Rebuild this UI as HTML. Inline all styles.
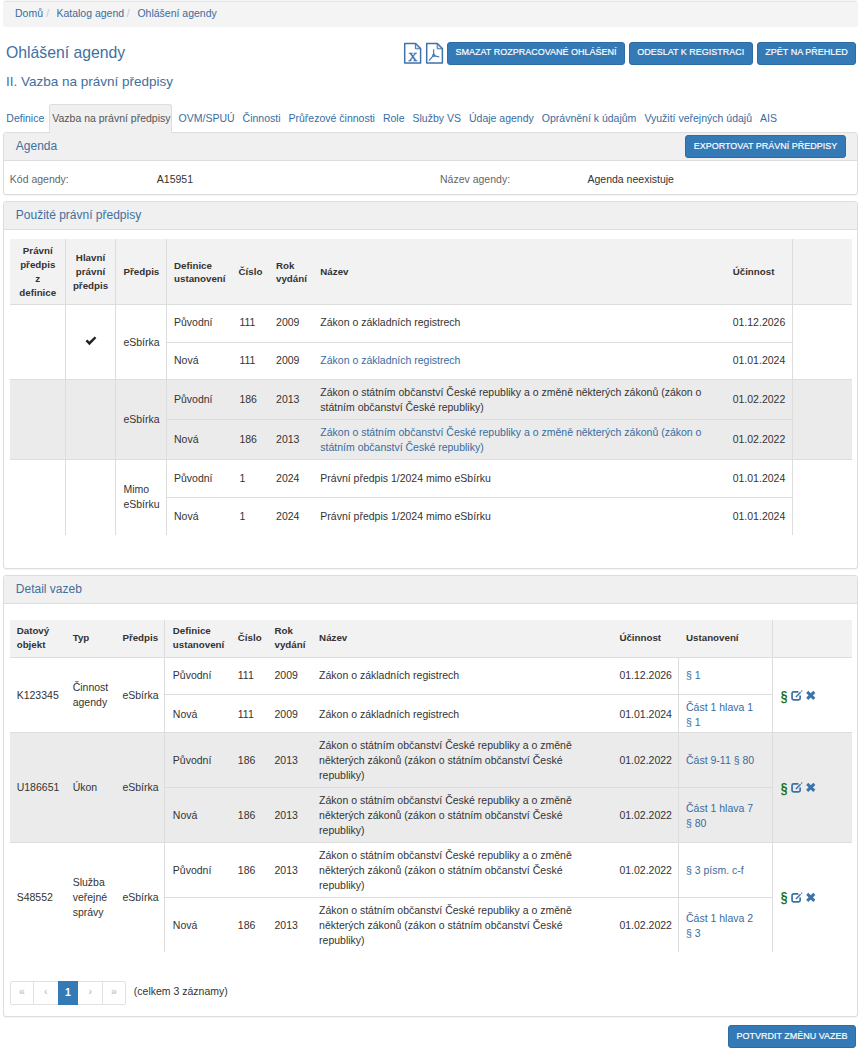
<!DOCTYPE html>
<html><head><meta charset="utf-8"><title>Ohlášení agendy</title>
<style>
html,body{margin:0;padding:0;background:#fff;}
body{width:861px;height:1052px;position:relative;overflow:hidden;font-family:"Liberation Sans",sans-serif;}
.a{position:absolute;}
.t{position:absolute;white-space:nowrap;font-family:"Liberation Sans",sans-serif;}
svg text{font-family:"Liberation Serif",serif;}
</style></head><body>
<div class="a" style="left:3px;top:0px;width:855px;height:26.5px;background:#f4f4f4;border-radius:3px;"></div>
<div class="t" style="left:15px;top:5.96px;font-size:10.5px;line-height:15.0px;color:#386c9f;">Domů</div>
<div class="t" style="left:46.3px;top:5.96px;font-size:10.5px;line-height:15.0px;color:#c8c8c8;">/</div>
<div class="t" style="left:56.4px;top:5.96px;font-size:10.5px;line-height:15.0px;color:#386c9f;">Katalog agend</div>
<div class="t" style="left:126.7px;top:5.96px;font-size:10.5px;line-height:15.0px;color:#c8c8c8;">/</div>
<div class="t" style="left:137.4px;top:5.96px;font-size:10.5px;line-height:15.0px;color:#386c9f;">Ohlášení agendy</div>
<div class="a" style="left:5px;top:1px;width:851px;height:1px;background:#e6e6e6;"></div>
<div class="t" style="left:6px;top:41.69px;font-size:15.75px;line-height:22.5px;color:#416f9f;">Ohlášení agendy</div>
<div class="t" style="left:6px;top:71.87px;font-size:13.5px;line-height:19.29px;color:#416f9f;">II. Vazba na právní předpisy</div>
<div class="a" style="left:447px;top:42px;width:178px;height:22.5px;background:#337ab7;border:1px solid #2e6da4;box-sizing:border-box;border-radius:3px;"></div>
<div class="t" style="left:447px;width:178px;top:44.92px;font-size:9.75px;line-height:14px;color:#fff;text-align:center;letter-spacing:0px;transform:scaleX(0.922);transform-origin:50% 50%;-webkit-text-stroke:0.18px #fff;">SMAZAT ROZPRACOVANÉ OHLÁŠENÍ</div>
<div class="a" style="left:629px;top:42px;width:123.5px;height:22.5px;background:#337ab7;border:1px solid #2e6da4;box-sizing:border-box;border-radius:3px;"></div>
<div class="t" style="left:629px;width:123.5px;top:44.92px;font-size:9.75px;line-height:14px;color:#fff;text-align:center;letter-spacing:0px;transform:scaleX(0.922);transform-origin:50% 50%;-webkit-text-stroke:0.18px #fff;">ODESLAT K REGISTRACI</div>
<div class="a" style="left:757px;top:42px;width:99px;height:22.5px;background:#337ab7;border:1px solid #2e6da4;box-sizing:border-box;border-radius:3px;"></div>
<div class="t" style="left:757px;width:99px;top:44.92px;font-size:9.75px;line-height:14px;color:#fff;text-align:center;letter-spacing:0px;transform:scaleX(0.922);transform-origin:50% 50%;-webkit-text-stroke:0.18px #fff;">ZPĚT NA PŘEHLED</div>
<svg class="a" style="left:400px;top:40px" width="48" height="28" viewBox="0 0 48 28">
<path d="M4.7 3.6 H15.6 L20.6 8.6 V23.1 H4.7 Z" fill="#fff" stroke="#3d72ad" stroke-width="1.5" stroke-linejoin="round"/>
<path d="M15.4 3.8 V8.8 H20.4 Z" fill="#d6e6f6" stroke="#3d72ad" stroke-width="1"/>
<text x="12.7" y="20.7" font-family="Liberation Serif" font-size="12.5" fill="#3d72ad" stroke="#3d72ad" stroke-width="0.45" text-anchor="middle">X</text>
<path d="M26.7 3.6 H37.4 L42.4 8.6 V23.1 H26.7 Z" fill="#fff" stroke="#3d72ad" stroke-width="1.5" stroke-linejoin="round"/>
<path d="M37.2 3.8 V8.8 H42.2 Z" fill="#d6e6f6" stroke="#3d72ad" stroke-width="1"/>
<path d="M33.7 9.3 V15.2 M33.5 15.4 L29 20.6 M33.9 15.6 L39.3 17" stroke="#3d72ad" stroke-width="1.1" fill="none"/>
<circle cx="33.7" cy="15.4" r="1.3" fill="none" stroke="#3d72ad" stroke-width="0.9"/>
</svg>
<div class="a" style="left:49px;top:104px;width:123px;height:29px;background:#f0f0f0;border:1px solid #dddddd;box-sizing:border-box;border-radius:3px;border-bottom:none;"></div>
<div class="t" style="left:6.3px;top:110.56px;font-size:10.5px;line-height:15.0px;color:#386c9f;">Definice</div>
<div class="t" style="left:52.239999999999995px;top:110.56px;font-size:10.5px;line-height:15.0px;color:#555;">Vazba na právní předpisy</div>
<div class="t" style="left:178.6px;top:110.56px;font-size:10.5px;line-height:15.0px;color:#386c9f;">OVM/SPUÚ</div>
<div class="t" style="left:242.6px;top:110.56px;font-size:10.5px;line-height:15.0px;color:#386c9f;">Činnosti</div>
<div class="t" style="left:288.53999999999996px;top:110.56px;font-size:10.5px;line-height:15.0px;color:#386c9f;">Průřezové činnosti</div>
<div class="t" style="left:382.94999999999993px;top:110.56px;font-size:10.5px;line-height:15.0px;color:#386c9f;">Role</div>
<div class="t" style="left:412.5399999999999px;top:110.56px;font-size:10.5px;line-height:15.0px;color:#386c9f;">Služby VS</div>
<div class="t" style="left:468.9799999999999px;top:110.56px;font-size:10.5px;line-height:15.0px;color:#386c9f;">Údaje agendy</div>
<div class="t" style="left:541.81px;top:110.56px;font-size:10.5px;line-height:15.0px;color:#386c9f;">Oprávnění k údajům</div>
<div class="t" style="left:644.42px;top:110.56px;font-size:10.5px;line-height:15.0px;color:#386c9f;">Využití veřejných údajů</div>
<div class="t" style="left:760.05px;top:110.56px;font-size:10.5px;line-height:15.0px;color:#386c9f;">AIS</div>
<div class="a" style="left:3px;top:132px;width:855px;height:63px;background:#fff;border:1px solid #dddddd;box-sizing:border-box;border-radius:3px;box-shadow:0 1px 1px rgba(0,0,0,.05);"></div>
<div class="a" style="left:4px;top:133px;width:853px;height:27px;background:#f0f0f0;border-radius:2px 2px 0 0;"></div>
<div class="a" style="left:4px;top:160px;width:853px;height:1px;background:#dddddd;"></div>
<div class="t" style="left:15.8px;top:138.07px;font-size:12px;line-height:17.14px;color:#416f9f;">Agenda</div>
<div class="a" style="left:50px;top:132px;width:121px;height:2px;background:#f0f0f0;"></div>
<div class="a" style="left:685px;top:135px;width:161px;height:22.80000000000001px;background:#337ab7;border:1px solid #2e6da4;box-sizing:border-box;border-radius:3px;"></div>
<div class="t" style="left:685px;width:161px;top:138.92px;font-size:9.75px;line-height:14px;color:#fff;text-align:center;letter-spacing:0px;transform:scaleX(0.922);transform-origin:50% 50%;-webkit-text-stroke:0.18px #fff;">EXPORTOVAT PRÁVNÍ PŘEDPISY</div>
<div class="t" style="left:9.8px;top:171.96px;font-size:10.5px;line-height:15.0px;color:#666;">Kód agendy:</div>
<div class="t" style="left:156.8px;top:171.96px;font-size:10.5px;line-height:15.0px;color:#333;">A15951</div>
<div class="t" style="left:440px;top:171.96px;font-size:10.5px;line-height:15.0px;color:#666;">Název agendy:</div>
<div class="t" style="left:587.5px;top:171.96px;font-size:10.5px;line-height:15.0px;color:#333;">Agenda neexistuje</div>
<div class="a" style="left:3px;top:201px;width:855px;height:368px;background:#fff;border:1px solid #dddddd;box-sizing:border-box;border-radius:3px;box-shadow:0 1px 1px rgba(0,0,0,.05);"></div>
<div class="a" style="left:4px;top:202px;width:853px;height:27px;background:#f0f0f0;border-radius:2px 2px 0 0;"></div>
<div class="a" style="left:4px;top:229px;width:853px;height:1px;background:#dddddd;"></div>
<div class="t" style="left:15.8px;top:207.27px;font-size:12px;line-height:17.14px;color:#416f9f;">Použité právní předpisy</div>
<div class="a" style="left:10px;top:239px;width:842px;height:65px;background:#f2f2f2;"></div>
<div class="a" style="left:10px;top:379px;width:842px;height:80px;background:#ebebeb;"></div>
<div class="a" style="left:10px;top:304px;width:842px;height:1px;background:#ddd;"></div>
<div class="a" style="left:10px;top:379px;width:842px;height:1px;background:#ddd;"></div>
<div class="a" style="left:10px;top:459px;width:842px;height:1px;background:#ddd;"></div>
<div class="a" style="left:166px;top:342px;width:626px;height:1px;background:#ddd;"></div>
<div class="a" style="left:166px;top:419px;width:626px;height:1px;background:#ddd;"></div>
<div class="a" style="left:166px;top:497px;width:626px;height:1px;background:#ddd;"></div>
<div class="a" style="left:65px;top:239px;width:1px;height:296px;background:#ddd;"></div>
<div class="a" style="left:115px;top:239px;width:1px;height:296px;background:#ddd;"></div>
<div class="a" style="left:166px;top:239px;width:1px;height:296px;background:#ddd;"></div>
<div class="a" style="left:792px;top:239px;width:1px;height:296px;background:#ddd;"></div>
<div class="t" style="left:10.75px;top:244.22px;font-size:9.75px;line-height:13.8px;color:#333;font-weight:bold;width:54px;text-align:center;">Právní<br>předpis<br>z<br>definice</div>
<div class="t" style="left:65.5px;top:251.12px;font-size:9.75px;line-height:13.8px;color:#333;font-weight:bold;width:50px;text-align:center;">Hlavní<br>právní<br>předpis</div>
<div class="t" style="left:123.5px;top:265.25px;font-size:9.75px;line-height:13.93px;color:#333;font-weight:bold;">Předpis</div>
<div class="t" style="left:174px;top:258.52px;font-size:9.75px;line-height:13.8px;color:#333;font-weight:bold;">Definice<br>ustanovení</div>
<div class="t" style="left:238.5px;top:265.45px;font-size:9.75px;line-height:13.93px;color:#333;font-weight:bold;">Číslo</div>
<div class="t" style="left:276px;top:258.52px;font-size:9.75px;line-height:13.8px;color:#333;font-weight:bold;">Rok<br>vydání</div>
<div class="t" style="left:320.3px;top:265.45px;font-size:9.75px;line-height:13.93px;color:#333;font-weight:bold;">Název</div>
<div class="t" style="left:732.7px;top:265.45px;font-size:9.75px;line-height:13.93px;color:#333;font-weight:bold;">Účinnost</div>
<svg class="a" style="left:85px;top:336px" width="12" height="10" viewBox="0 0 12 10"><path d="M0.6 5.2 L2.3 3.6 L4.4 5.6 L9.7 0.4 L11.4 2.1 L4.4 9.2 Z" fill="#222"/></svg>
<div class="t" style="left:123.4px;top:334.56px;font-size:10.5px;line-height:15.0px;color:#333;">eSbírka</div>
<div class="t" style="left:174px;top:315.46px;font-size:10.5px;line-height:15.0px;color:#333;">Původní</div>
<div class="t" style="left:239.4px;top:315.46px;font-size:10.5px;line-height:15.0px;color:#333;">111</div>
<div class="t" style="left:276.1px;top:315.46px;font-size:10.5px;line-height:15.0px;color:#333;">2009</div>
<div class="t" style="left:320.3px;top:315.46px;font-size:10.5px;line-height:15.0px;color:#333;">Zákon o základních registrech</div>
<div class="t" style="left:732.7px;top:315.46px;font-size:10.5px;line-height:15.0px;color:#333;">01.12.2026</div>
<div class="t" style="left:174px;top:353.16px;font-size:10.5px;line-height:15.0px;color:#333;">Nová</div>
<div class="t" style="left:239.4px;top:353.16px;font-size:10.5px;line-height:15.0px;color:#333;">111</div>
<div class="t" style="left:276.1px;top:353.16px;font-size:10.5px;line-height:15.0px;color:#333;">2009</div>
<div class="t" style="left:320.3px;top:353.16px;font-size:10.5px;line-height:15.0px;color:#386c9f;">Zákon o základních registrech</div>
<div class="t" style="left:732.7px;top:353.16px;font-size:10.5px;line-height:15.0px;color:#333;">01.01.2024</div>
<div class="t" style="left:123.4px;top:411.86px;font-size:10.5px;line-height:15.0px;color:#333;">eSbírka</div>
<div class="t" style="left:174px;top:391.86px;font-size:10.5px;line-height:15.0px;color:#333;">Původní</div>
<div class="t" style="left:239.4px;top:391.86px;font-size:10.5px;line-height:15.0px;color:#333;">186</div>
<div class="t" style="left:276.1px;top:391.86px;font-size:10.5px;line-height:15.0px;color:#333;">2013</div>
<div class="t" style="left:320.3px;top:384.86px;font-size:10.5px;line-height:15px;color:#333;">Zákon o státním občanství České republiky a o změně některých zákonů (zákon o<br>státním občanství České republiky)</div>
<div class="t" style="left:732.7px;top:391.86px;font-size:10.5px;line-height:15.0px;color:#333;">01.02.2022</div>
<div class="t" style="left:174px;top:431.56px;font-size:10.5px;line-height:15.0px;color:#333;">Nová</div>
<div class="t" style="left:239.4px;top:431.56px;font-size:10.5px;line-height:15.0px;color:#333;">186</div>
<div class="t" style="left:276.1px;top:431.56px;font-size:10.5px;line-height:15.0px;color:#333;">2013</div>
<div class="t" style="left:320.3px;top:424.56px;font-size:10.5px;line-height:15px;color:#386c9f;">Zákon o státním občanství České republiky a o změně některých zákonů (zákon o<br>státním občanství České republiky)</div>
<div class="t" style="left:732.7px;top:431.56px;font-size:10.5px;line-height:15.0px;color:#333;">01.02.2022</div>
<div class="t" style="left:123.4px;top:481.86px;font-size:10.5px;line-height:15px;color:#333;">Mimo<br>eSbírku</div>
<div class="t" style="left:174px;top:470.86px;font-size:10.5px;line-height:15.0px;color:#333;">Původní</div>
<div class="t" style="left:239.4px;top:470.86px;font-size:10.5px;line-height:15.0px;color:#333;">1</div>
<div class="t" style="left:276.1px;top:470.86px;font-size:10.5px;line-height:15.0px;color:#333;">2024</div>
<div class="t" style="left:320.3px;top:470.86px;font-size:10.5px;line-height:15.0px;color:#333;">Právní předpis 1/2024 mimo eSbírku</div>
<div class="t" style="left:732.7px;top:470.86px;font-size:10.5px;line-height:15.0px;color:#333;">01.01.2024</div>
<div class="t" style="left:174px;top:508.66px;font-size:10.5px;line-height:15.0px;color:#333;">Nová</div>
<div class="t" style="left:239.4px;top:508.66px;font-size:10.5px;line-height:15.0px;color:#333;">1</div>
<div class="t" style="left:276.1px;top:508.66px;font-size:10.5px;line-height:15.0px;color:#333;">2024</div>
<div class="t" style="left:320.3px;top:508.66px;font-size:10.5px;line-height:15.0px;color:#333;">Právní předpis 1/2024 mimo eSbírku</div>
<div class="t" style="left:732.7px;top:508.66px;font-size:10.5px;line-height:15.0px;color:#333;">01.01.2024</div>
<div class="a" style="left:3px;top:575px;width:855px;height:442px;background:#fff;border:1px solid #dddddd;box-sizing:border-box;border-radius:3px;box-shadow:0 1px 1px rgba(0,0,0,.05);"></div>
<div class="a" style="left:4px;top:576px;width:853px;height:27px;background:#f0f0f0;border-radius:2px 2px 0 0;"></div>
<div class="a" style="left:4px;top:603px;width:853px;height:1px;background:#dddddd;"></div>
<div class="t" style="left:15.8px;top:581.07px;font-size:12px;line-height:17.14px;color:#416f9f;">Detail vazeb</div>
<div class="a" style="left:10px;top:620px;width:842px;height:37px;background:#f2f2f2;"></div>
<div class="a" style="left:10px;top:732px;width:842px;height:110px;background:#ebebeb;"></div>
<div class="a" style="left:10px;top:657px;width:842px;height:1px;background:#ddd;"></div>
<div class="a" style="left:10px;top:732px;width:842px;height:1px;background:#ddd;"></div>
<div class="a" style="left:10px;top:842px;width:842px;height:1px;background:#ddd;"></div>
<div class="a" style="left:164px;top:694px;width:608px;height:1px;background:#ddd;"></div>
<div class="a" style="left:164px;top:787px;width:608px;height:1px;background:#ddd;"></div>
<div class="a" style="left:164px;top:897px;width:608px;height:1px;background:#ddd;"></div>
<div class="a" style="left:164px;top:620px;width:1px;height:332px;background:#ddd;"></div>
<div class="a" style="left:772px;top:620px;width:1px;height:332px;background:#ddd;"></div>
<div class="a" style="left:678px;top:657px;width:1px;height:295px;background:#ddd;"></div>
<div class="t" style="left:16.7px;top:623.92px;font-size:9.75px;line-height:14px;color:#333;font-weight:bold;">Datový<br>objekt</div>
<div class="t" style="left:72.7px;top:630.95px;font-size:9.75px;line-height:13.93px;color:#333;font-weight:bold;">Typ</div>
<div class="t" style="left:122.4px;top:630.95px;font-size:9.75px;line-height:13.93px;color:#333;font-weight:bold;">Předpis</div>
<div class="t" style="left:172.8px;top:623.92px;font-size:9.75px;line-height:14px;color:#333;font-weight:bold;">Definice<br>ustanovení</div>
<div class="t" style="left:237.8px;top:630.95px;font-size:9.75px;line-height:13.93px;color:#333;font-weight:bold;">Číslo</div>
<div class="t" style="left:274.5px;top:623.92px;font-size:9.75px;line-height:14px;color:#333;font-weight:bold;">Rok<br>vydání</div>
<div class="t" style="left:319.1px;top:630.95px;font-size:9.75px;line-height:13.93px;color:#333;font-weight:bold;">Název</div>
<div class="t" style="left:619.4px;top:630.95px;font-size:9.75px;line-height:13.93px;color:#333;font-weight:bold;">Účinnost</div>
<div class="t" style="left:686px;top:630.95px;font-size:9.75px;line-height:13.93px;color:#333;font-weight:bold;">Ustanovení</div>
<div class="t" style="left:16.7px;top:687.86px;font-size:10.5px;line-height:15.0px;color:#333;">K123345</div>
<div class="t" style="left:72.7px;top:680.36px;font-size:10.5px;line-height:15px;color:#333;">Činnost<br>agendy</div>
<div class="t" style="left:122.4px;top:687.86px;font-size:10.5px;line-height:15.0px;color:#333;">eSbírka</div>
<div class="t" style="left:172.8px;top:667.86px;font-size:10.5px;line-height:15.0px;color:#333;">Původní</div>
<div class="t" style="left:237.8px;top:667.86px;font-size:10.5px;line-height:15.0px;color:#333;">111</div>
<div class="t" style="left:274.5px;top:667.86px;font-size:10.5px;line-height:15.0px;color:#333;">2009</div>
<div class="t" style="left:319.1px;top:667.86px;font-size:10.5px;line-height:15px;color:#333;">Zákon o základních registrech</div>
<div class="t" style="left:619.4px;top:667.86px;font-size:10.5px;line-height:15.0px;color:#333;">01.12.2026</div>
<div class="t" style="left:686px;top:667.86px;font-size:10.5px;line-height:15px;color:#386c9f;">§ 1</div>
<div class="t" style="left:172.8px;top:706.66px;font-size:10.5px;line-height:15.0px;color:#333;">Nová</div>
<div class="t" style="left:237.8px;top:706.66px;font-size:10.5px;line-height:15.0px;color:#333;">111</div>
<div class="t" style="left:274.5px;top:706.66px;font-size:10.5px;line-height:15.0px;color:#333;">2009</div>
<div class="t" style="left:319.1px;top:706.66px;font-size:10.5px;line-height:15px;color:#333;">Zákon o základních registrech</div>
<div class="t" style="left:619.4px;top:706.66px;font-size:10.5px;line-height:15.0px;color:#333;">01.01.2024</div>
<div class="t" style="left:686px;top:699.96px;font-size:10.5px;line-height:15px;color:#386c9f;">Část 1 hlava 1<br>§ 1</div>
<div class="t" style="left:778.6px;top:686.7px;width:10px;text-align:center;font-size:15.5px;line-height:18px;font-weight:bold;color:#197319;transform:scaleX(0.78);">§</div>
<svg class="a" style="left:788px;top:686.0px" width="32" height="18" viewBox="0 0 32 18">
<path d="M10.4 5.85 H5.6 Q4.05 5.85 4.05 7.4 V12.3 Q4.05 13.85 5.6 13.85 H10.6 Q12.15 13.85 12.15 12.3 V9.6" fill="none" stroke="#3a72a8" stroke-width="1.7"/>
<path d="M7.9 10.9 L12.6 6.2" stroke="#3a72a8" stroke-width="1.4"/>
<path d="M13.2 5.5 L14.3 4.6" stroke="#3a72a8" stroke-width="1.1"/>
<path d="M19.2 5.9 L26.3 12.9 M26.3 5.9 L19.2 12.9" stroke="#3a74ad" stroke-width="2.9"/>
</svg>
<div class="t" style="left:16.7px;top:779.56px;font-size:10.5px;line-height:15.0px;color:#333;">U186651</div>
<div class="t" style="left:72.7px;top:779.56px;font-size:10.5px;line-height:15.0px;color:#333;">Úkon</div>
<div class="t" style="left:122.4px;top:779.56px;font-size:10.5px;line-height:15.0px;color:#333;">eSbírka</div>
<div class="t" style="left:172.8px;top:752.66px;font-size:10.5px;line-height:15.0px;color:#333;">Původní</div>
<div class="t" style="left:237.8px;top:752.66px;font-size:10.5px;line-height:15.0px;color:#333;">186</div>
<div class="t" style="left:274.5px;top:752.66px;font-size:10.5px;line-height:15.0px;color:#333;">2013</div>
<div class="t" style="left:319.1px;top:737.66px;font-size:10.5px;line-height:15px;color:#333;">Zákon o státním občanství České republiky a o změně<br>některých zákonů (zákon o státním občanství České<br>republiky)</div>
<div class="t" style="left:619.4px;top:752.66px;font-size:10.5px;line-height:15.0px;color:#333;">01.02.2022</div>
<div class="t" style="left:686px;top:752.66px;font-size:10.5px;line-height:15px;color:#386c9f;">Část 9-11 § 80</div>
<div class="t" style="left:172.8px;top:807.76px;font-size:10.5px;line-height:15.0px;color:#333;">Nová</div>
<div class="t" style="left:237.8px;top:807.76px;font-size:10.5px;line-height:15.0px;color:#333;">186</div>
<div class="t" style="left:274.5px;top:807.76px;font-size:10.5px;line-height:15.0px;color:#333;">2013</div>
<div class="t" style="left:319.1px;top:792.76px;font-size:10.5px;line-height:15px;color:#333;">Zákon o státním občanství České republiky a o změně<br>některých zákonů (zákon o státním občanství České<br>republiky)</div>
<div class="t" style="left:619.4px;top:807.76px;font-size:10.5px;line-height:15.0px;color:#333;">01.02.2022</div>
<div class="t" style="left:686px;top:801.06px;font-size:10.5px;line-height:15px;color:#386c9f;">Část 1 hlava 7<br>§ 80</div>
<div class="t" style="left:778.6px;top:778.5px;width:10px;text-align:center;font-size:15.5px;line-height:18px;font-weight:bold;color:#197319;transform:scaleX(0.78);">§</div>
<svg class="a" style="left:788px;top:777.8px" width="32" height="18" viewBox="0 0 32 18">
<path d="M10.4 5.85 H5.6 Q4.05 5.85 4.05 7.4 V12.3 Q4.05 13.85 5.6 13.85 H10.6 Q12.15 13.85 12.15 12.3 V9.6" fill="none" stroke="#3a72a8" stroke-width="1.7"/>
<path d="M7.9 10.9 L12.6 6.2" stroke="#3a72a8" stroke-width="1.4"/>
<path d="M13.2 5.5 L14.3 4.6" stroke="#3a72a8" stroke-width="1.1"/>
<path d="M19.2 5.9 L26.3 12.9 M26.3 5.9 L19.2 12.9" stroke="#3a74ad" stroke-width="2.9"/>
</svg>
<div class="t" style="left:16.7px;top:889.66px;font-size:10.5px;line-height:15.0px;color:#333;">S48552</div>
<div class="t" style="left:72.7px;top:874.56px;font-size:10.5px;line-height:15px;color:#333;">Služba<br>veřejné<br>správy</div>
<div class="t" style="left:122.4px;top:889.66px;font-size:10.5px;line-height:15.0px;color:#333;">eSbírka</div>
<div class="t" style="left:172.8px;top:862.96px;font-size:10.5px;line-height:15.0px;color:#333;">Původní</div>
<div class="t" style="left:237.8px;top:862.96px;font-size:10.5px;line-height:15.0px;color:#333;">186</div>
<div class="t" style="left:274.5px;top:862.96px;font-size:10.5px;line-height:15.0px;color:#333;">2013</div>
<div class="t" style="left:319.1px;top:847.96px;font-size:10.5px;line-height:15px;color:#333;">Zákon o státním občanství České republiky a o změně<br>některých zákonů (zákon o státním občanství České<br>republiky)</div>
<div class="t" style="left:619.4px;top:862.96px;font-size:10.5px;line-height:15.0px;color:#333;">01.02.2022</div>
<div class="t" style="left:686px;top:862.96px;font-size:10.5px;line-height:15px;color:#386c9f;">§ 3 písm. c-f</div>
<div class="t" style="left:172.8px;top:917.56px;font-size:10.5px;line-height:15.0px;color:#333;">Nová</div>
<div class="t" style="left:237.8px;top:917.56px;font-size:10.5px;line-height:15.0px;color:#333;">186</div>
<div class="t" style="left:274.5px;top:917.56px;font-size:10.5px;line-height:15.0px;color:#333;">2013</div>
<div class="t" style="left:319.1px;top:902.56px;font-size:10.5px;line-height:15px;color:#333;">Zákon o státním občanství České republiky a o změně<br>některých zákonů (zákon o státním občanství České<br>republiky)</div>
<div class="t" style="left:619.4px;top:917.56px;font-size:10.5px;line-height:15.0px;color:#333;">01.02.2022</div>
<div class="t" style="left:686px;top:910.86px;font-size:10.5px;line-height:15px;color:#386c9f;">Část 1 hlava 2<br>§ 3</div>
<div class="t" style="left:778.6px;top:888.2px;width:10px;text-align:center;font-size:15.5px;line-height:18px;font-weight:bold;color:#197319;transform:scaleX(0.78);">§</div>
<svg class="a" style="left:788px;top:887.5px" width="32" height="18" viewBox="0 0 32 18">
<path d="M10.4 5.85 H5.6 Q4.05 5.85 4.05 7.4 V12.3 Q4.05 13.85 5.6 13.85 H10.6 Q12.15 13.85 12.15 12.3 V9.6" fill="none" stroke="#3a72a8" stroke-width="1.7"/>
<path d="M7.9 10.9 L12.6 6.2" stroke="#3a72a8" stroke-width="1.4"/>
<path d="M13.2 5.5 L14.3 4.6" stroke="#3a72a8" stroke-width="1.1"/>
<path d="M19.2 5.9 L26.3 12.9 M26.3 5.9 L19.2 12.9" stroke="#3a74ad" stroke-width="2.9"/>
</svg>
<div class="a" style="left:10px;top:981px;width:116px;height:24px;background:#fff;border:1px solid #e2e2e2;box-sizing:border-box;border-radius:2px;"></div>
<div class="a" style="left:33px;top:981px;width:1px;height:24px;background:#e2e2e2;"></div>
<div class="a" style="left:102px;top:981px;width:1px;height:24px;background:#e2e2e2;"></div>
<div class="a" style="left:58px;top:981px;width:20px;height:24px;background:#337ab7;"></div>
<div class="t" style="left:10.5px;top:983.86px;font-size:10.5px;line-height:15.0px;color:#b5b5b5;width:23px;text-align:center;">«</div>
<div class="t" style="left:33.75px;top:983.86px;font-size:10.5px;line-height:15.0px;color:#b5b5b5;width:24px;text-align:center;">‹</div>
<div class="t" style="left:58.0px;top:984.86px;font-size:10.5px;line-height:15.0px;color:#fff;font-weight:bold;width:20px;text-align:center;">1</div>
<div class="t" style="left:78.25px;top:983.86px;font-size:10.5px;line-height:15.0px;color:#b5b5b5;width:24px;text-align:center;">›</div>
<div class="t" style="left:102.5px;top:983.86px;font-size:10.5px;line-height:15.0px;color:#b5b5b5;width:23px;text-align:center;">»</div>
<div class="t" style="left:133.8px;top:984.16px;font-size:10.5px;line-height:15.0px;color:#333;">(celkem 3 záznamy)</div>
<div class="a" style="left:728px;top:1025px;width:128px;height:22.799999999999955px;background:#337ab7;border:1px solid #2e6da4;box-sizing:border-box;border-radius:3px;"></div>
<div class="t" style="left:728px;width:128px;top:1028.92px;font-size:9.75px;line-height:14px;color:#fff;text-align:center;letter-spacing:0px;transform:scaleX(0.922);transform-origin:50% 50%;-webkit-text-stroke:0.18px #fff;">POTVRDIT ZMĚNU VAZEB</div>
</body></html>
